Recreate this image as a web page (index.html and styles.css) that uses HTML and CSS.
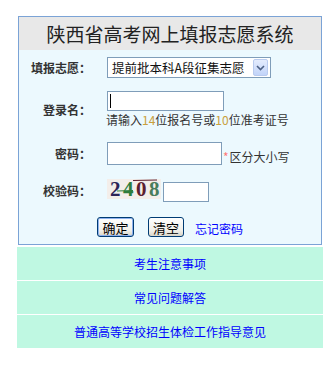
FILE: index.html
```html
<!DOCTYPE html>
<html lang="zh-CN">
<head>
<meta charset="utf-8">
<title>陕西省高考网上填报志愿系统</title>
<link rel="stylesheet" href="styles.css">
</head>
<body>
<div class="wrap">
  <div class="box">
    <div class="head">陕西省高考网上填报志愿系统</div>
    <div class="form">
      <div class="row r1">
        <div class="label">填报志愿：</div>
        <div class="select">
          <span class="sel-text">提前批本科A段征集志愿</span>
          <span class="sel-btn"><svg width="9" height="6" viewBox="0 0 9 6"><path d="M1 1 L4.5 4.5 L8 1" fill="none" stroke="#4d6185" stroke-width="1.6"/></svg></span>
        </div>
      </div>
      <div class="row r2">
        <div class="label">登录名：</div>
        <div class="col">
          <div class="input login"><span class="caret"></span></div>
          <div class="hint">请输入<span class="num">14</span>位报名号或<span class="num">10</span>位准考证号</div>
        </div>
      </div>
      <div class="row r3">
        <div class="label">密码：</div>
        <div class="input pwd"></div>
        <div class="note"><span class="star">*</span>区分大小写</div>
      </div>
      <div class="row r4">
        <div class="label">校验码：</div>
        <div class="captcha">
          <span class="d d1">2</span><span class="d d2">4</span><span class="d d3">0</span><span class="d d4">8</span>
          <svg class="noise" width="54" height="20" viewBox="0 0 54 20">
            <path d="M26 1.5 L50 1" stroke="#5c2030" stroke-width="1"/>
            <path d="M10 12 L26 11.5" stroke="#2e7d3c" stroke-width="1"/>
          </svg>
        </div>
        <div class="input code"></div>
      </div>
      <div class="row r5">
        <span class="btn def">确定</span>
        <span class="btn clr">清空</span>
        <a class="forgot" href="#">忘记密码</a>
      </div>
    </div>
  </div>
  <div class="links">
    <a class="link" href="#">考生注意事项</a>
    <a class="link" href="#">常见问题解答</a>
    <a class="link" href="#">普通高等学校招生体检工作指导意见</a>
  </div>
</div>
</body>
</html>
```
FILE: styles.css
```css
* { box-sizing: border-box; }
body {
  margin: 0;
  background: #fff;
  font-family: "Noto Sans CJK SC", "DejaVu Sans", sans-serif;
  color: #333;
  font-size: 12px;
}
.wrap {
  margin: 16px 0 0 17px;
  width: 306px;
}
.box {
  margin: 0 1px;
  border: 1px solid #7ba3d6;
  background: #ecf9fe;
}
.head {
  height: 33px;
  background: #e8e8e8;
  display: flex;
  align-items: center;
  justify-content: center;
  font-size: 19px;
  color: #222;
  line-height: 1;
}
.form {
  padding: 7px 0 7px 0;
  display: flex;
  flex-direction: column;
}
.row {
  display: flex;
  align-items: center;
}
.label {
  width: 72px;
  margin-right: 16px;
  text-align: right;
  font-weight: bold;
  font-size: 12px;
  color: #333;
  line-height: 14px;
}
.r1 { height: 21px; }
.r2 { height: 37px; margin-top: 13px; }
.r3 { height: 23px; margin-top: 14px; }
.r4 { height: 23px; margin-top: 14px; align-items: flex-start; }
.r4 .label { align-self: center; }
.r5 { height: 20px; margin-top: 15px; padding-left: 78px; }

.select {
  width: 164px;
  height: 21px;
  border: 1px solid #7f9db9;
  background: #fff;
  display: flex;
  align-items: center;
  justify-content: space-between;
  padding: 0 2px 0 4px;
}
.sel-text {
  font-size: 12.5px;
  color: #111;
  line-height: 15px;
  white-space: nowrap;
}
.sel-btn {
  flex: none;
  width: 15px;
  height: 17px;
  border: 1px solid #b9cbef;
  border-radius: 2px;
  background: linear-gradient(#e4ecfd, #c2d4f9);
  display: flex;
  align-items: center;
  justify-content: center;
}
.col {
  display: flex;
  flex-direction: column;
}
.input {
  border: 1px solid #7f9db9;
  background: #fff;
}
.login {
  width: 117px;
  height: 20px;
  position: relative;
}
.caret {
  position: absolute;
  left: 2px;
  top: 2px;
  width: 1px;
  height: 14px;
  background: #000;
}
.hint {
  font-size: 12px;
  line-height: 17px;
  color: #333;
  margin-left: -1px;
}
.num { color: #c9a03c; }
.pwd {
  width: 115px;
  height: 23px;
}
.note {
  align-self: flex-end;
  line-height: 14px;
  margin-bottom: 1px;
  margin-left: 1px;
  font-size: 12px;
  color: #333;
}
.star { color: #f77; margin-right: 1px; }
.captcha {
  flex: none;
  position: relative;
  width: 54px;
  height: 20px;
  background: #f3eeea;
  display: flex;
  padding-left: 3px;
  gap: 1px;
  font-family: "Liberation Serif", serif;
  font-weight: bold;
  font-size: 21px;
  line-height: 20px;
}
.d { display: block; width: 12px; height: 20px; }
.d1 { color: #2c2458; }
.d2 { color: #2e7d3c; }
.d3 { color: #5c2030; }
.d4 { color: #4a7d5c; }
.noise {
  position: absolute;
  left: 0;
  top: 0;
}
.code {
  width: 46px;
  height: 20px;
  margin: 3px 0 0 2px;
}
.btn {
  display: flex;
  align-items: center;
  justify-content: center;
  height: 20px;
  border: 1px solid #003c74;
  border-radius: 3px;
  background: linear-gradient(#ffffff, #f0efe8 70%, #d8d5c8);
  font-size: 13px;
  color: #000;
  line-height: 1;
}
.def {
  width: 37px;
  box-shadow: inset 0 0 0 1px #8fb2ee;
}
.clr {
  width: 36px;
  margin-left: 14px;
}
.forgot {
  margin-left: 11px;
  color: #00f;
  text-decoration: none;
  font-size: 12px;
  line-height: 14px;
  margin-top: 4px;
}
.links {
  margin-top: 2px;
  display: flex;
  flex-direction: column;
  gap: 1px;
}
.link {
  display: block;
  height: 33px;
  line-height: 33px;
  background: #bff8e2;
  color: #00f;
  text-align: center;
  text-decoration: none;
  font-size: 12px;
}
```
